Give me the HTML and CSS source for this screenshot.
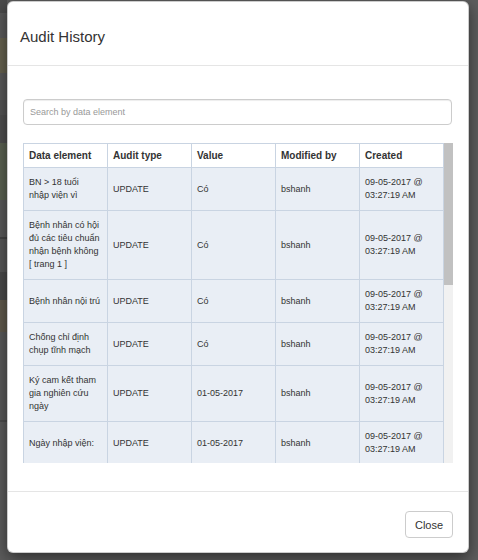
FILE: index.html
```html
<!DOCTYPE html>
<html>
<head>
<meta charset="utf-8">
<link rel="stylesheet" href="styles.css">
</head>
<body>
<div class="modal">
  <div class="modal-header">
    <h4 class="modal-title">Audit History</h4>
  </div>
  <div class="modal-body">
    <input class="search" type="text" placeholder="Search by data element">
    <div class="table-wrap">
      <div class="table-view">
        <table class="audit">
          <thead>
            <tr><th>Data element</th><th>Audit type</th><th>Value</th><th>Modified by</th><th>Created</th></tr>
          </thead>
          <tbody>
            <tr><td>BN &gt; 18 tuổi<br>nhập viện vì</td><td>UPDATE</td><td>Có</td><td>bshanh</td><td>09-05-2017 @<br>03:27:19 AM</td></tr>
            <tr><td>Bệnh nhân có hội<br>đủ các tiêu chuẩn<br>nhận bệnh không<br>[ trang 1 ]</td><td>UPDATE</td><td>Có</td><td>bshanh</td><td>09-05-2017 @<br>03:27:19 AM</td></tr>
            <tr><td>Bệnh nhân nội trú</td><td>UPDATE</td><td>Có</td><td>bshanh</td><td>09-05-2017 @<br>03:27:19 AM</td></tr>
            <tr><td>Chống chỉ định<br>chụp tĩnh mạch</td><td>UPDATE</td><td>Có</td><td>bshanh</td><td>09-05-2017 @<br>03:27:19 AM</td></tr>
            <tr><td>Ký cam kết tham<br>gia nghiên cứu<br>ngày</td><td>UPDATE</td><td>01-05-2017</td><td>bshanh</td><td>09-05-2017 @<br>03:27:19 AM</td></tr>
            <tr><td>Ngày nhập viện:</td><td>UPDATE</td><td>01-05-2017</td><td>bshanh</td><td>09-05-2017 @<br>03:27:19 AM</td></tr>
          </tbody>
        </table>
      </div>
      <div class="scrollbar"><div class="thumb"></div></div>
    </div>
  </div>
  <div class="modal-footer">
    <button class="btn" type="button">Close</button>
  </div>
</div>
</body>
</html>
```
FILE: styles.css
```css
html, body {
  margin: 0;
  padding: 0;
}
body {
  width: 478px;
  height: 560px;
  overflow: hidden;
  font-family: "Liberation Sans", Arial, sans-serif;
  color: #333;
  background-color: #5d5d5d;
  background-image: linear-gradient(to bottom,
    #4c4c4c 0, #4c4c4c 13px,
    #5a5a5a 13px, #5a5a5a 38px,
    #66624f 38px, #66624f 73px,
    #5a5a5a 73px, #5a5a5a 100px,
    #545454 100px, #545454 115px,
    #4f4f4f 115px, #4f4f4f 143px,
    #5b6252 143px, #5b6252 200px,
    #5a5a5a 200px, #5a5a5a 237px,
    #444 237px, #444 239px,
    #575757 239px, #575757 272px,
    #4a4a4a 272px, #4a4a4a 300px,
    #615a4d 300px, #615a4d 332px,
    #5a5a5a 332px, #5a5a5a 420px,
    #4d4d4d 420px, #4d4d4d 422px,
    #5c5c5c 422px);
  background-size: 7px 560px;
  background-repeat: no-repeat;
}
.modal {
  width: 462px;
  height: 552px;
  margin: 1px 0 0 7px;
  box-sizing: border-box;
  background: #fff;
  border: 1px solid rgba(0, 0, 0, 0.2);
  border-radius: 6px;
  box-shadow: 0 5px 15px rgba(0, 0, 0, 0.5);
  display: flex;
  flex-direction: column;
}
.modal-header {
  padding: 25px 12px 18px;
  border-bottom: 1px solid #e5e5e5;
}
.modal-title {
  margin: 0;
  font-size: 15px;
  line-height: 20px;
  font-weight: normal;
  color: #333;
}
.modal-body {
  padding: 33px 15px 28px;
  display: flex;
  flex-direction: column;
}
.search {
  display: block;
  box-sizing: border-box;
  width: 429px;
  height: 26px;
  margin: 0 0 18px;
  padding: 0 6px;
  border: 1px solid #ccc;
  border-radius: 4px;
  box-shadow: inset 0 1px 1px rgba(0, 0, 0, 0.075);
  font-family: "Liberation Sans", Arial, sans-serif;
  font-size: 9px;
  color: #555;
  outline: none;
}
.search::placeholder {
  color: #999;
}
.table-wrap {
  width: 430px;
  height: 320px;
  display: flex;
}
.table-view {
  width: 421px;
  height: 320px;
  overflow: hidden;
}
.scrollbar {
  width: 9px;
  height: 320px;
  background: #f1f1f1;
}
.thumb {
  width: 9px;
  height: 142px;
  background: #c1c1c1;
}
.audit {
  width: 421px;
  table-layout: fixed;
  border-collapse: collapse;
}
.audit th, .audit td {
  border: 1px solid #c9d4e2;
  text-align: left;
  vertical-align: middle;
  white-space: nowrap;
  overflow: hidden;
  line-height: 13px;
}
.audit th {
  background: #fff;
  padding: 5px 5px;
  font-size: 10px;
  font-weight: bold;
  color: #333;
}
.audit td {
  background: #e9eef5;
  padding: 8px 5px;
  font-size: 9px;
  color: #333;
}
.modal-footer {
  margin-top: auto;
  border-top: 1px solid #e5e5e5;
  padding: 19px 15px 14px;
  display: flex;
  justify-content: flex-end;
}
.btn {
  width: 48px;
  height: 27px;
  box-sizing: border-box;
  padding: 0;
  background: #fff;
  border: 1px solid #ccc;
  border-radius: 4px;
  font-family: "Liberation Sans", Arial, sans-serif;
  font-size: 11px;
  color: #333;
}
```
